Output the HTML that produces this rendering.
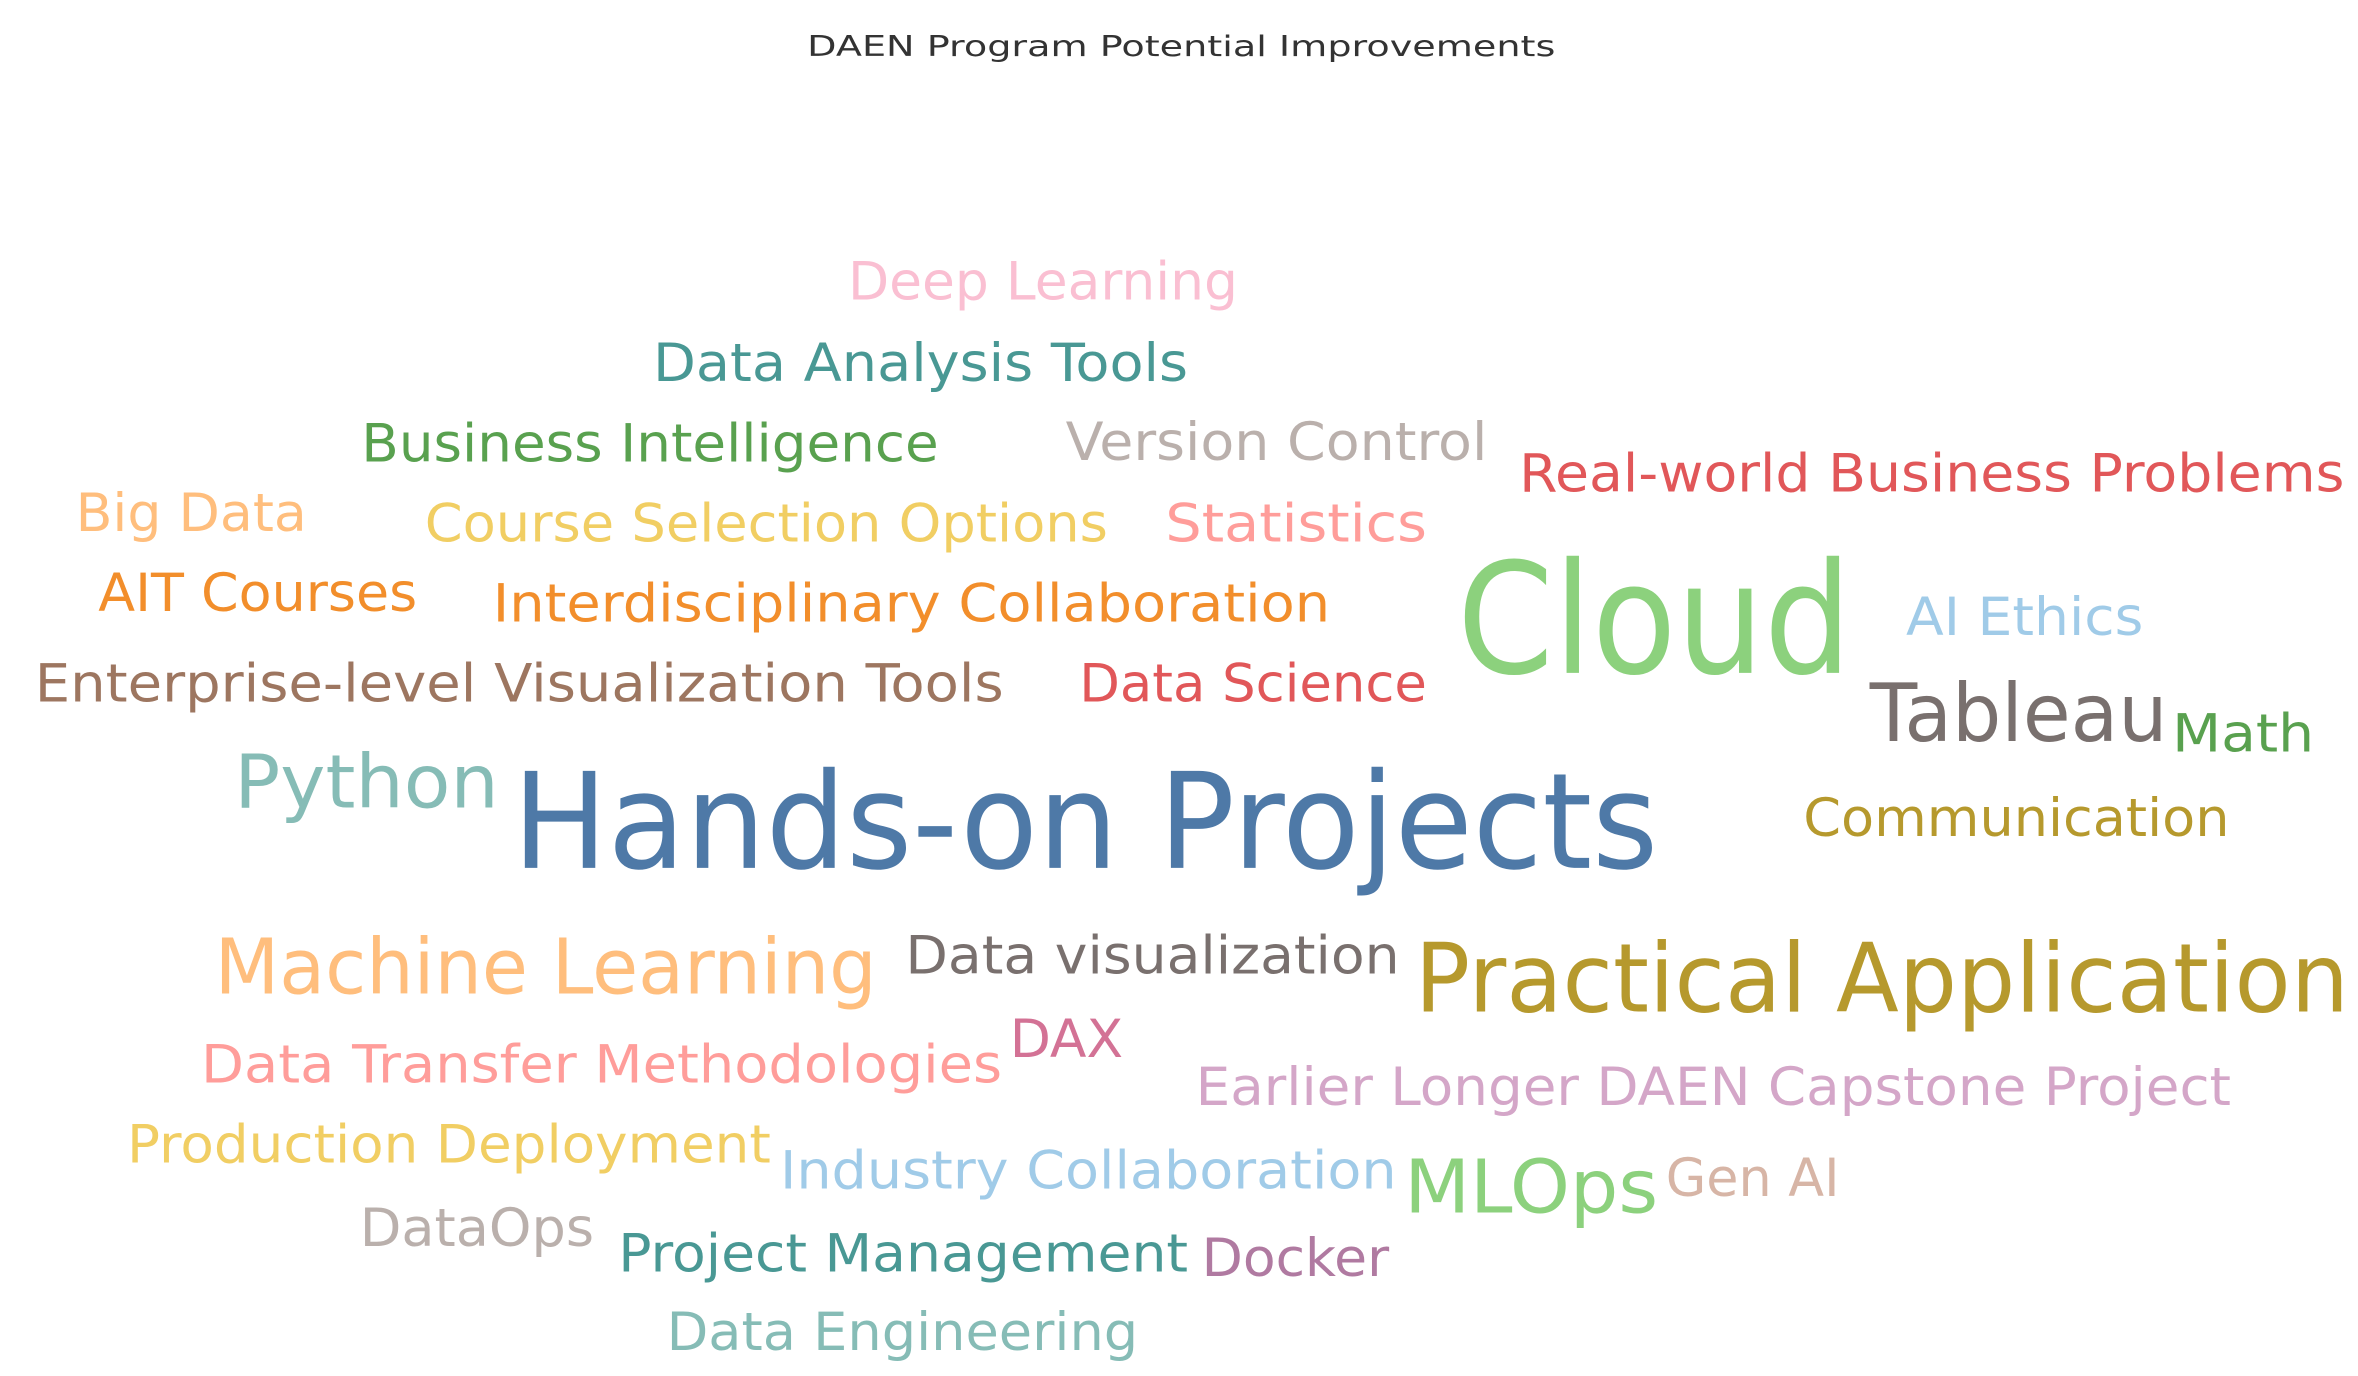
<!DOCTYPE html>
<html><head><meta charset="utf-8"><style>
html,body{margin:0;padding:0;background:#fff;}
svg{display:block;}
text{font-family:"DejaVu Sans","Liberation Sans",sans-serif;}
</style></head><body>
<svg width="2358" height="1376" viewBox="0 0 1560 910" xmlns="http://www.w3.org/2000/svg">
<g transform="translate(-1,-1)">
<text x="535" y="38" font-size="19" fill="#333" textLength="495" lengthAdjust="spacingAndGlyphs">DAEN Program Potential Improvements</text>
<text x="562" y="199" font-size="35" fill="#FABFD2" textLength="258" lengthAdjust="spacingAndGlyphs">Deep Learning</text>
<text x="433" y="253" font-size="35" fill="#499894" textLength="354" lengthAdjust="spacingAndGlyphs">Data Analysis Tools</text>
<text x="240" y="306" font-size="35" fill="#59A14F" textLength="382" lengthAdjust="spacingAndGlyphs">Business Intelligence</text>
<text x="706" y="305" font-size="35" fill="#BAB0AC" textLength="279" lengthAdjust="spacingAndGlyphs">Version Control</text>
<text x="1006" y="326" font-size="35" fill="#E15759" textLength="546" lengthAdjust="spacingAndGlyphs">Real-world Business Problems</text>
<text x="51" y="352" font-size="35" fill="#FFBE7D" textLength="153" lengthAdjust="spacingAndGlyphs">Big Data</text>
<text x="282" y="359" font-size="35" fill="#F1CE63" textLength="452" lengthAdjust="spacingAndGlyphs">Course Selection Options</text>
<text x="772" y="359" font-size="35" fill="#FF9D9A" textLength="173" lengthAdjust="spacingAndGlyphs">Statistics</text>
<text x="66" y="405" font-size="35" fill="#F28E2B" textLength="211" lengthAdjust="spacingAndGlyphs">AIT Courses</text>
<text x="327" y="412" font-size="35" fill="#F28E2B" textLength="554" lengthAdjust="spacingAndGlyphs">Interdisciplinary Collaboration</text>
<text x="965" y="446" font-size="102" fill="#8CD17D" textLength="261" lengthAdjust="spacingAndGlyphs">Cloud</text>
<text x="1262" y="421" font-size="35" fill="#A0CBE8" textLength="157" lengthAdjust="spacingAndGlyphs">AI Ethics</text>
<text x="24" y="465" font-size="35" fill="#9D7660" textLength="641" lengthAdjust="spacingAndGlyphs">Enterprise-level Visualization Tools</text>
<text x="715" y="465" font-size="35" fill="#E15759" textLength="230" lengthAdjust="spacingAndGlyphs">Data Science</text>
<text x="1238" y="491" font-size="53" fill="#79706E" textLength="197" lengthAdjust="spacingAndGlyphs">Tableau</text>
<text x="1438" y="498" font-size="35" fill="#59A14F" textLength="94" lengthAdjust="spacingAndGlyphs">Math</text>
<text x="156" y="535" font-size="49" fill="#86BCB6" textLength="175" lengthAdjust="spacingAndGlyphs">Python</text>
<text x="340" y="575" font-size="88" fill="#4E79A7" textLength="758" lengthAdjust="spacingAndGlyphs">Hands-on Projects</text>
<text x="1194" y="554" font-size="35" fill="#B6992D" textLength="282" lengthAdjust="spacingAndGlyphs">Communication</text>
<text x="143" y="658" font-size="51" fill="#FFBE7D" textLength="438" lengthAdjust="spacingAndGlyphs">Machine Learning</text>
<text x="600" y="645" font-size="35" fill="#79706E" textLength="327" lengthAdjust="spacingAndGlyphs">Data visualization</text>
<text x="937" y="670" font-size="63" fill="#B6992D" textLength="618" lengthAdjust="spacingAndGlyphs">Practical Application</text>
<text x="669" y="700" font-size="35" fill="#D37295" textLength="75" lengthAdjust="spacingAndGlyphs">DAX</text>
<text x="134" y="717" font-size="35" fill="#FF9D9A" textLength="530" lengthAdjust="spacingAndGlyphs">Data Transfer Methodologies</text>
<text x="792" y="732" font-size="35" fill="#D4A6C8" textLength="685" lengthAdjust="spacingAndGlyphs">Earlier Longer DAEN Capstone Project</text>
<text x="85" y="770" font-size="35" fill="#F1CE63" textLength="426" lengthAdjust="spacingAndGlyphs">Production Deployment</text>
<text x="517" y="787" font-size="35" fill="#A0CBE8" textLength="408" lengthAdjust="spacingAndGlyphs">Industry Collaboration</text>
<text x="930" y="803" font-size="49" fill="#8CD17D" textLength="168" lengthAdjust="spacingAndGlyphs">MLOps</text>
<text x="1103" y="792" font-size="35" fill="#D7B5A6" textLength="115" lengthAdjust="spacingAndGlyphs">Gen AI</text>
<text x="239" y="825" font-size="35" fill="#BAB0AC" textLength="155" lengthAdjust="spacingAndGlyphs">DataOps</text>
<text x="410" y="842" font-size="35" fill="#499894" textLength="377" lengthAdjust="spacingAndGlyphs">Project Management</text>
<text x="796" y="845" font-size="35" fill="#B07AA1" textLength="124" lengthAdjust="spacingAndGlyphs">Docker</text>
<text x="442" y="894" font-size="35" fill="#86BCB6" textLength="312" lengthAdjust="spacingAndGlyphs">Data Engineering</text>
</g>
</svg>
</body></html>
